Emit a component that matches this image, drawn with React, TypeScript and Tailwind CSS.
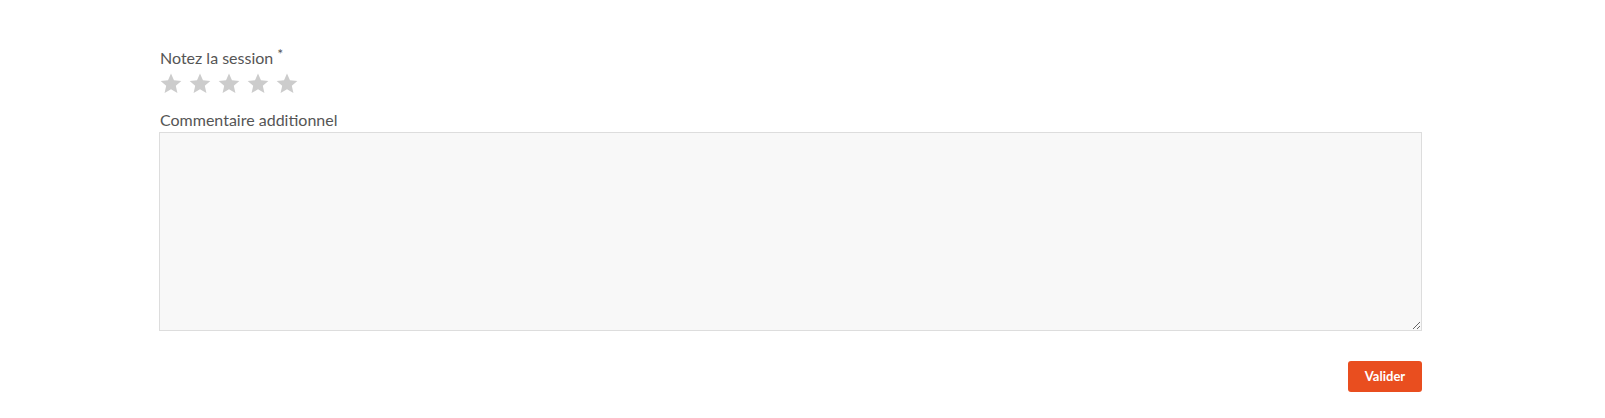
import * as React from "react"

function Star() {
  return (
    <svg viewBox="0 0 24 24" className="w-[24px] h-[23px]" fill="#cccccc">
      <path d="M12 1.5l3.1 7.1 7.7.7-5.8 5.1 1.7 7.6L12 18l-6.7 4 1.7-7.6L1.2 9.3l7.7-.7z" />
    </svg>
  )
}

export default function App() {
  const [comment, setComment] = React.useState("")

  return (
    <div className="w-[1605px] h-[418px] bg-white" style={{ fontFamily: "Lato, 'Open Sans', sans-serif" }}>
      <form className="ml-[159px] w-[1263px] pt-[47px] flex flex-col">
        {/* Rating */}
        <label className="text-[16px] leading-[22px] text-[#555555] pl-[1px]">
          Notez la session
          <span className="relative top-[-5px] ml-[4px] text-[14px] text-[#555555]">*</span>
        </label>
        <div className="flex items-center gap-[5px] mt-[2px]">
          {[1, 2, 3, 4, 5].map((n) => (
            <Star key={n} />
          ))}
        </div>

        {/* Comment */}
        <label className="mt-[14px] text-[16px] leading-[22px] text-[#555555] pl-[1px]">
          Commentaire additionnel
        </label>
        <textarea
          value={comment}
          onChange={(e) => setComment(e.target.value)}
          className="mt-[1px] w-full h-[199px] bg-[#f8f8f8] border border-[#dddddd] outline-none p-2 text-sm"
        />

        <div className="flex justify-end mt-[30px]">
          <button
            type="button"
            className="w-[74px] h-[31px] rounded-[3px] bg-[#e94e1f] text-white text-[13px] font-bold"
          >
            Valider
          </button>
        </div>
      </form>
    </div>
  )
}
